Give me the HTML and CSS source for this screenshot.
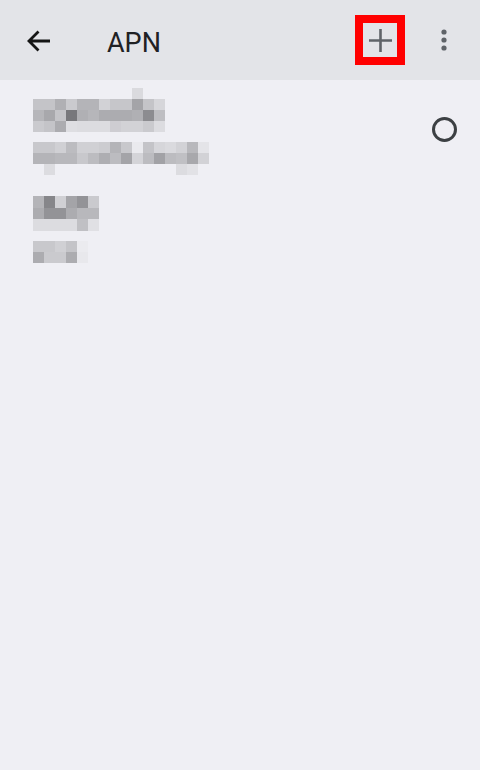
FILE: index.html
```html
<!DOCTYPE html>
<html lang="en">
<head>
<meta charset="utf-8">
<title>APN</title>
<link rel="stylesheet" href="styles.css">
</head>
<body>
<header class="appbar">
  <svg class="back" viewBox="0 0 24 24" width="24" height="24" aria-hidden="true">
    <path d="M23 12H2M11.5 2.5L2 12L11.5 21.5" fill="none" stroke="#151515" stroke-width="2.8"/>
  </svg>
  <h1 class="title">APN</h1>
  <div class="spacer"></div>
  <div class="add-box">
    <svg class="plus" viewBox="0 0 34 34" width="34" height="34" aria-hidden="true">
      <path d="M6 17.5H29M17.5 6V29" fill="none" stroke="#5f6368" stroke-width="2.6"/>
    </svg>
  </div>
  <svg class="more" viewBox="0 0 24 24" width="24" height="24" aria-hidden="true">
    <circle cx="12" cy="4" r="2.6" fill="#5f6368"/>
    <circle cx="12" cy="12" r="2.6" fill="#5f6368"/>
    <circle cx="12" cy="20" r="2.6" fill="#5f6368"/>
  </svg>
</header>

<main class="list">
  <div class="item item-first">
    <div class="texts">
      <div class="pix pix-a">
        <i></i><i></i><i></i><i></i><i></i><i></i><i></i><i></i><i></i><i class="sda"></i><i></i><i></i>
        <i class="sc4"></i><i class="sc4"></i><i class="sb0"></i><i class="sca"></i><i class="sb4"></i><i class="sb4"></i><i class="sd2"></i><i class="sc6"></i><i class="sc6"></i><i class="sa4"></i><i class="sc4"></i><i class="sd6"></i>
        <i class="sb6"></i><i class="sa8"></i><i class="sc4"></i><i class="s78"></i><i class="sb0"></i><i class="sb6"></i><i class="sac"></i><i class="sac"></i><i class="sac"></i><i class="sb0"></i><i class="s8c"></i><i class="sbe"></i>
        <i class="sca"></i><i class="sc4"></i><i class="sac"></i><i class="sde"></i><i class="sdc"></i><i class="sdc"></i><i class="sdc"></i><i class="sce"></i><i class="sd2"></i><i class="sd2"></i><i class="sca"></i><i class="sdc"></i>
      </div>
      <div class="pix pix-b">
        <i class="sc8"></i><i class="sc8"></i><i class="sd0"></i><i class="sbc"></i><i class="sd0"></i><i class="sd0"></i><i class="scc"></i><i class="sb4"></i><i class="sc8"></i><i class="sea"></i><i class="sc4"></i><i class="sd6"></i><i class="sda"></i><i class="sd2"></i><i class="sb8"></i><i class="se4"></i>
        <i class="sb4"></i><i class="sb4"></i><i class="sb8"></i><i class="sb8"></i><i class="sc8"></i><i class="sbc"></i><i class="sae"></i><i class="sbc"></i><i class="sa4"></i><i class="sd4"></i><i class="sbc"></i><i class="sa2"></i><i class="sbc"></i><i class="sc0"></i><i class="sa8"></i><i class="sd2"></i>
        <i></i><i class="sdc"></i><i></i><i></i><i></i><i></i><i></i><i></i><i></i><i></i><i></i><i></i><i></i><i class="sdc"></i><i class="se2"></i><i></i>
      </div>
    </div>
    <span class="radio" aria-hidden="true"></span>
  </div>

  <div class="item item-second">
    <div class="texts">
      <div class="pix pix-c">
        <i class="sb4"></i><i class="s86"></i><i class="sd0"></i><i class="sa4"></i><i class="s93"></i><i class="sca"></i>
        <i class="sac"></i><i class="s93"></i><i class="s93"></i><i class="sac"></i><i class="sb8"></i><i class="sb8"></i>
        <i class="sdc"></i><i class="sdc"></i><i class="sdc"></i><i class="sdc"></i><i class="sc0"></i><i class="se0"></i>
      </div>
      <div class="pix pix-d">
        <i class="sc8"></i><i class="sc8"></i><i class="sd0"></i><i class="sc4"></i><i class="seb"></i>
        <i class="sac"></i><i class="sca"></i><i class="sca"></i><i class="sac"></i><i class="se8"></i>
      </div>
    </div>
  </div>
</main>
</body>
</html>
```

FILE: styles.css
```css
* {
  box-sizing: border-box;
}

html, body {
  margin: 0;
  padding: 0;
}

body {
  width: 480px;
  min-height: 770px;
  background: #efeff4;
  font-family: Roboto, "Noto Sans", "Liberation Sans", sans-serif;
  color: #202124;
}

.appbar {
  display: flex;
  align-items: center;
  height: 80px;
  background: #e3e4e8;
  padding: 0 24px 0 27px;
}

.back {
  flex: none;
  display: block;
  margin-top: 2px;
}

.title {
  margin: 6px 0 0 56px;
  font-size: 27px;
  font-weight: 400;
  line-height: 1;
  color: #202124;
}

.spacer {
  flex: 1;
}

.add-box {
  flex: none;
  width: 50px;
  height: 50px;
  border: 8px solid #ff0000;
  display: flex;
  align-items: center;
  justify-content: center;
}

.plus {
  display: block;
}

.more {
  flex: none;
  display: block;
  margin-left: 27px;
}

.list {
  padding: 8px 23px 0 33px;
}

.item {
  display: flex;
  justify-content: space-between;
  align-items: flex-start;
}

.item-second {
  margin-top: 21px;
}

.texts {
  display: flex;
  flex-direction: column;
}

.pix {
  display: grid;
  grid-auto-rows: 11px;
}

.pix i {
  display: block;
}

.pix-a {
  grid-template-columns: repeat(12, 11px);
}

.pix-b {
  grid-template-columns: repeat(16, 11px);
  margin-top: 10px;
}

.pix-c {
  grid-template-columns: repeat(6, 11px);
  grid-auto-rows: 11.5px;
}

.pix-d {
  grid-template-columns: repeat(5, 11px);
  margin-top: 10px;
}

.radio {
  flex: none;
  width: 25px;
  height: 25px;
  margin-top: 29px;
  border: 3px solid #3c4043;
  border-radius: 50%;
}

.s78 { background: #78787c; }
.s86 { background: #86868a; }
.s8c { background: #8c8c90; }
.s93 { background: #939397; }
.sa2 { background: #a2a2a6; }
.sa4 { background: #a4a4a8; }
.sa8 { background: #a8a8ac; }
.sac { background: #acacb0; }
.sae { background: #aeaeb2; }
.sb0 { background: #b0b0b4; }
.sb4 { background: #b4b4b8; }
.sb6 { background: #b6b6ba; }
.sb8 { background: #b8b8bc; }
.sbc { background: #bcbcc0; }
.sbe { background: #bebec2; }
.sc0 { background: #c0c0c4; }
.sc4 { background: #c4c4c8; }
.sc6 { background: #c6c6ca; }
.sc8 { background: #c8c8cc; }
.sca { background: #cacace; }
.scc { background: #ccccd0; }
.sce { background: #cecdd2; }
.sd0 { background: #d0d0d4; }
.sd2 { background: #d2d2d6; }
.sd4 { background: #d4d4d8; }
.sd6 { background: #d6d6da; }
.sda { background: #dadade; }
.sdc { background: #dcdce0; }
.sde { background: #dedee2; }
.se0 { background: #e0e0e4; }
.se2 { background: #e2e2e6; }
.se4 { background: #e4e4e8; }
.se8 { background: #e8e8ec; }
.sea { background: #eaeaee; }
.seb { background: #ebebef; }
```
